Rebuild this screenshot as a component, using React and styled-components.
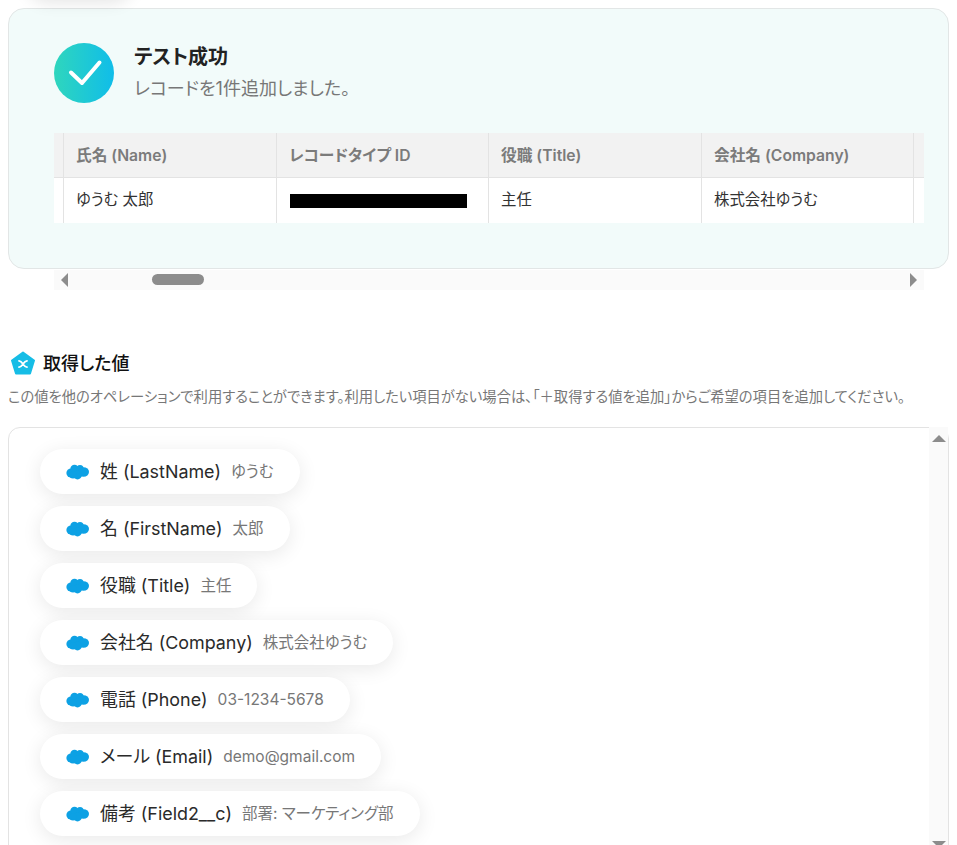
import React from "react";
import styled, { createGlobalStyle } from "styled-components";

const Global = createGlobalStyle`
  html, body { margin: 0; padding: 0; height: 845px; overflow: hidden; background: #fff; }
  body {
    font-family: Inter, "Noto Sans CJK JP", "Noto Sans", sans-serif;
    font-feature-settings: "palt";
    color: #2a2a2a;
  }
  * { box-sizing: border-box; }
`;

const Page = styled.div`
  position: relative;
  width: 957px;
  height: 845px;
  overflow: hidden;
  padding: 8px 8px 0;
`;
const TopShadow = styled.div`
  position: absolute;
  left: 26px;
  top: -46px;
  width: 108px;
  height: 45px;
  border-radius: 24px;
  box-shadow: 0 4px 16px rgba(0, 0, 0, 0.1);
`;
const SuccessCard = styled.section`
  width: 941px;
  height: 261px;
  border: 1px solid #e2e6e6;
  border-radius: 16px;
  background: #f2fbfa;
  padding: 34px 24px 0 45px;
`;
const Status = styled.div`
  display: flex;
  gap: 20px;
  align-items: center;
  height: 60px;
`;
const StatusText = styled.div`
  display: flex;
  flex-direction: column;
  gap: 8px;
`;
const StatusTitle = styled.div`
  font-size: 20px;
  line-height: 24px;
  font-weight: 700;
  color: #222;
`;
const StatusSub = styled.div`
  font-size: 18px;
  line-height: 24px;
  color: #777;
`;
const TableGrid = styled.div`
  margin-top: 30px;
  width: 870px;
  display: grid;
  grid-template-columns: 10px 213px 212px 213px 212px 10px;
  grid-auto-rows: 45px;
`;
const HeadCell = styled.div`
  background: #f2f2f2;
  border-right: ${(p) => (p.$edge === "end" ? "none" : "1px solid #e3e3e3")};
  border-bottom: 1px solid #e3e3e3;
  padding: 2px 0 0 ${(p) => (p.$edge ? 0 : 12)}px;
  display: flex;
  align-items: center;
  font-size: 15.7px;
  line-height: 20px;
  font-weight: 600;
  color: #7b7b7b;
`;
const BodyCell = styled.div`
  background: #fff;
  border-right: ${(p) => (p.$edge === "end" ? "none" : "1px solid #e3e3e3")};
  padding: 0 0 2px ${(p) => (p.$edge ? 0 : 12)}px;
  display: flex;
  align-items: center;
  font-size: 15.4px;
  line-height: 20px;
  color: #333;
`;
const Redacted = styled.div`
  width: 177px;
  height: 14px;
  background: #000;
  margin: 3px 0 0 1px;
`;
const HScroll = styled.div`
  margin: 1px 0 0 46px;
  width: 870px;
  height: 20px;
  background: #fafafa;
  display: flex;
  align-items: center;
  padding: 0 7px;
  position: relative;
`;
const HThumb = styled.div`
  position: absolute;
  left: 98px;
  top: 4px;
  width: 52px;
  height: 11px;
  border-radius: 6px;
  background: #8c8c8c;
`;
const Arrow = styled.div`
  width: 0;
  height: 0;
  border-style: solid;
  ${(p) =>
    p.$dir === "left" && "border-width: 7px 7px 7px 0; border-color: transparent #8c8c8c transparent transparent;"}
  ${(p) =>
    p.$dir === "right" && "border-width: 7px 0 7px 7px; border-color: transparent transparent transparent #8c8c8c; margin-left: auto;"}
  ${(p) =>
    p.$dir === "up" && "border-width: 0 7px 7px 7px; border-color: transparent transparent #8c8c8c transparent;"}
  ${(p) =>
    p.$dir === "down" && "border-width: 7px 7px 0 7px; border-color: #8c8c8c transparent transparent transparent;"}
`;
const SectionHead = styled.div`
  margin: 60px 0 0 3px;
  display: flex;
  align-items: center;
  gap: 8px;
  height: 26px;
`;
const SectionTitle = styled.h2`
  margin: 0;
  padding-top: 2px;
  font-size: 18px;
  line-height: 24px;
  font-weight: 500;
  color: #111;
`;
const SectionDesc = styled.p`
  margin: 11px 0 0;
  font-size: 14.3px;
  line-height: 20px;
  color: #777;
  white-space: nowrap;
`;
const ListBox = styled.div`
  margin-top: 20px;
  width: 941px;
  height: 440px;
  border: 1px solid #e3e3e3;
  border-radius: 12px;
  display: flex;
  background: #fff;
`;
const List = styled.div`
  flex: 1;
  padding: 21px 0 0 31px;
  display: flex;
  flex-direction: column;
  align-items: flex-start;
  gap: 12px;
`;
const Pill = styled.div`
  height: 45px;
  border-radius: 23px;
  background: #fff;
  padding: 0 26px;
  display: flex;
  align-items: center;
  line-height: 20px;
  box-shadow: 0 4px 20px rgba(0, 0, 0, 0.09);
  white-space: nowrap;
`;
const PillName = styled.span`
  margin-left: 11px;
  font-size: 17.9px;
  font-weight: 420;
  color: #2a2a2a;
`;
const PillValue = styled.span`
  margin-left: 10px;
  font-size: 15.5px;
  color: #777;
`;
const VScroll = styled.div`
  width: 19px;
  height: 100%;
  background: #fafafa;
  display: flex;
  flex-direction: column;
  align-items: center;
  justify-content: space-between;
  padding: 8px 0 17px;
  margin-top: -1px;
`;

const CheckIcon = () => (
  <svg width="60" height="60" viewBox="0 0 60 60">
    <defs>
      <linearGradient id="g" x1="0" y1="0" x2="1" y2="0">
        <stop offset="0" stopColor="#2fd6bd" />
        <stop offset="1" stopColor="#10bde9" />
      </linearGradient>
    </defs>
    <circle cx="30" cy="30" r="30" fill="url(#g)" />
    <path d="M17 29.5 L28 40 L45.5 19.5" fill="none" stroke="#fff" strokeWidth="4" strokeLinecap="round" strokeLinejoin="round" />
  </svg>
);

const PentagonIcon = () => (
  <svg width="24" height="24" viewBox="0 0 24 24">
    <path d="M12 1.5 L23 9.5 L19 22.5 L5 22.5 L1 9.5 Z" fill="#16bde6" stroke="#16bde6" strokeWidth="2" strokeLinejoin="round" />
    <path d="M8 9.8 C10 10 11 11.5 12 13 C13 14.5 14 16 16 16.2 M8 16.2 C10 16 11 14.5 12 13 C13 11.5 14 10 16 9.8" fill="none" stroke="#fff" strokeWidth="1.8" strokeLinecap="round" />
  </svg>
);

const CloudIcon = () => (
  <svg width="23" height="16" viewBox="0 0 23 16">
    <g fill="#0da1e4">
      <circle cx="5" cy="9" r="4.6" />
      <circle cx="8.5" cy="5" r="4.2" />
      <circle cx="14" cy="4.6" r="3.6" />
      <ellipse cx="17.5" cy="8" rx="5.5" ry="4.8" />
      <circle cx="11.5" cy="11" r="4.4" />
      <circle cx="7" cy="11" r="3.6" />
    </g>
  </svg>
);

const heads = ["氏名 (Name)", "レコードタイプ ID", "役職 (Title)", "会社名 (Company)"];
const items = [
  ["姓 (LastName)", "ゆうむ"],
  ["名 (FirstName)", "太郎"],
  ["役職 (Title)", "主任"],
  ["会社名 (Company)", "株式会社ゆうむ"],
  ["電話 (Phone)", "03-1234-5678"],
  ["メール (Email)", "demo@gmail.com"],
  ["備考 (Field2__c)", "部署: マーケティング部"],
];

export default function App() {
  return (
    <Page>
      <Global />
      <TopShadow />
      <SuccessCard>
        <Status>
          <CheckIcon />
          <StatusText>
            <StatusTitle>テスト成功</StatusTitle>
            <StatusSub>レコードを1件追加しました。</StatusSub>
          </StatusText>
        </Status>
        <TableGrid>
          <HeadCell $edge="start" />
          {heads.map((h) => (
            <HeadCell key={h}>{h}</HeadCell>
          ))}
          <HeadCell $edge="end" />
          <BodyCell $edge="start" />
          <BodyCell>ゆうむ 太郎</BodyCell>
          <BodyCell><Redacted /></BodyCell>
          <BodyCell>主任</BodyCell>
          <BodyCell>株式会社ゆうむ</BodyCell>
          <BodyCell $edge="end" />
        </TableGrid>
      </SuccessCard>
      <HScroll>
        <Arrow $dir="left" />
        <HThumb />
        <Arrow $dir="right" />
      </HScroll>
      <SectionHead>
        <PentagonIcon />
        <SectionTitle>取得した値</SectionTitle>
      </SectionHead>
      <SectionDesc>この値を他のオペレーションで利用することができます。利用したい項目がない場合は、「＋取得する値を追加」からご希望の項目を追加してください。</SectionDesc>
      <ListBox>
        <List>
          {items.map(([n, v]) => (
            <Pill key={n}>
              <CloudIcon />
              <PillName>{n}</PillName>
              <PillValue>{v}</PillValue>
            </Pill>
          ))}
        </List>
        <VScroll>
          <Arrow $dir="up" />
          <Arrow $dir="down" />
        </VScroll>
      </ListBox>
    </Page>
  );
}
